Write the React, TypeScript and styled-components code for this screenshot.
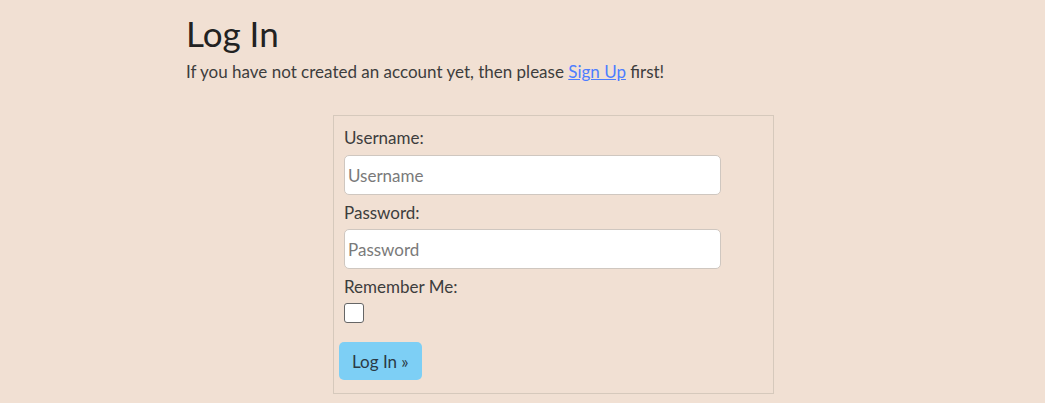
import { FC } from 'react';
import styled, { createGlobalStyle } from 'styled-components';

const GlobalStyle = createGlobalStyle`
  html, body {
    margin: 0;
    padding: 0;
    background: #f1e0d3;
  }
  body {
    font-family: 'Lato', 'Noto Sans', sans-serif;
    color: #3a3a3a;
  }
`;

const Page = styled.main`
  width: 673px;
  margin: 0 auto;
  padding-top: 13px;
`;

const Title = styled.h1`
  margin: 0;
  font-size: 35px;
  font-weight: 400;
  line-height: 40px;
  color: #222;
`;

const Intro = styled.p`
  margin: 9px 0 0;
  font-size: 17px;
  line-height: 20px;
  color: #3d3d3d;

  a {
    color: #4d7dff;
  }
`;

const FormBox = styled.form`
  width: 419px;
  margin: 33px 0 0 147px;
  padding: 10px 10px 13px;
  border: 1px solid #d6c9bc;
  display: flex;
  flex-direction: column;
  align-items: flex-start;
`;

const Label = styled.label`
  font-size: 17px;
  line-height: 24px;
  margin-bottom: 4px;
  color: #3d3d3d;

  &:first-child {
    margin-bottom: 5px;
  }
`;

const TextInput = styled.input`
  box-sizing: border-box;
  width: 377px;
  height: 40px;
  margin: 0 0 6px;
  padding: 0 3px;
  border: 1px solid #cfc7c0;
  border-radius: 5px;
  background: #fff;
  font-family: inherit;
  font-size: 17px;
  color: #333;

  &::placeholder {
    color: #7a7a7a;
  }
`;

const Check = styled.input`
  width: 20px;
  height: 20px;
  margin: 0 0 19px;
  appearance: none;
  border: 1px solid #666;
  border-radius: 3px;
  background: #fff;
`;

const SubmitButton = styled.button`
  margin-left: -5px;
  height: 38px;
  padding: 0 13px;
  border: none;
  border-radius: 5px;
  background: #7dcff5;
  font-family: inherit;
  font-size: 17px;
  color: #2b3a45;
`;

const App: FC = () => (
  <>
    <GlobalStyle />
    <Page>
      <Title>Log In</Title>
      <Intro>
        If you have not created an account yet, then please <a href="#">Sign Up</a> first!
      </Intro>
      <FormBox onSubmit={ e => e.preventDefault() }>
        <Label htmlFor="username">Username:</Label>
        <TextInput id="username" type="text" placeholder="Username" />
        <Label htmlFor="password">Password:</Label>
        <TextInput id="password" type="password" placeholder="Password" />
        <Label htmlFor="remember">Remember Me:</Label>
        <Check id="remember" type="checkbox" />
        <SubmitButton type="submit">Log In »</SubmitButton>
      </FormBox>
    </Page>
  </>
);

export default App;
